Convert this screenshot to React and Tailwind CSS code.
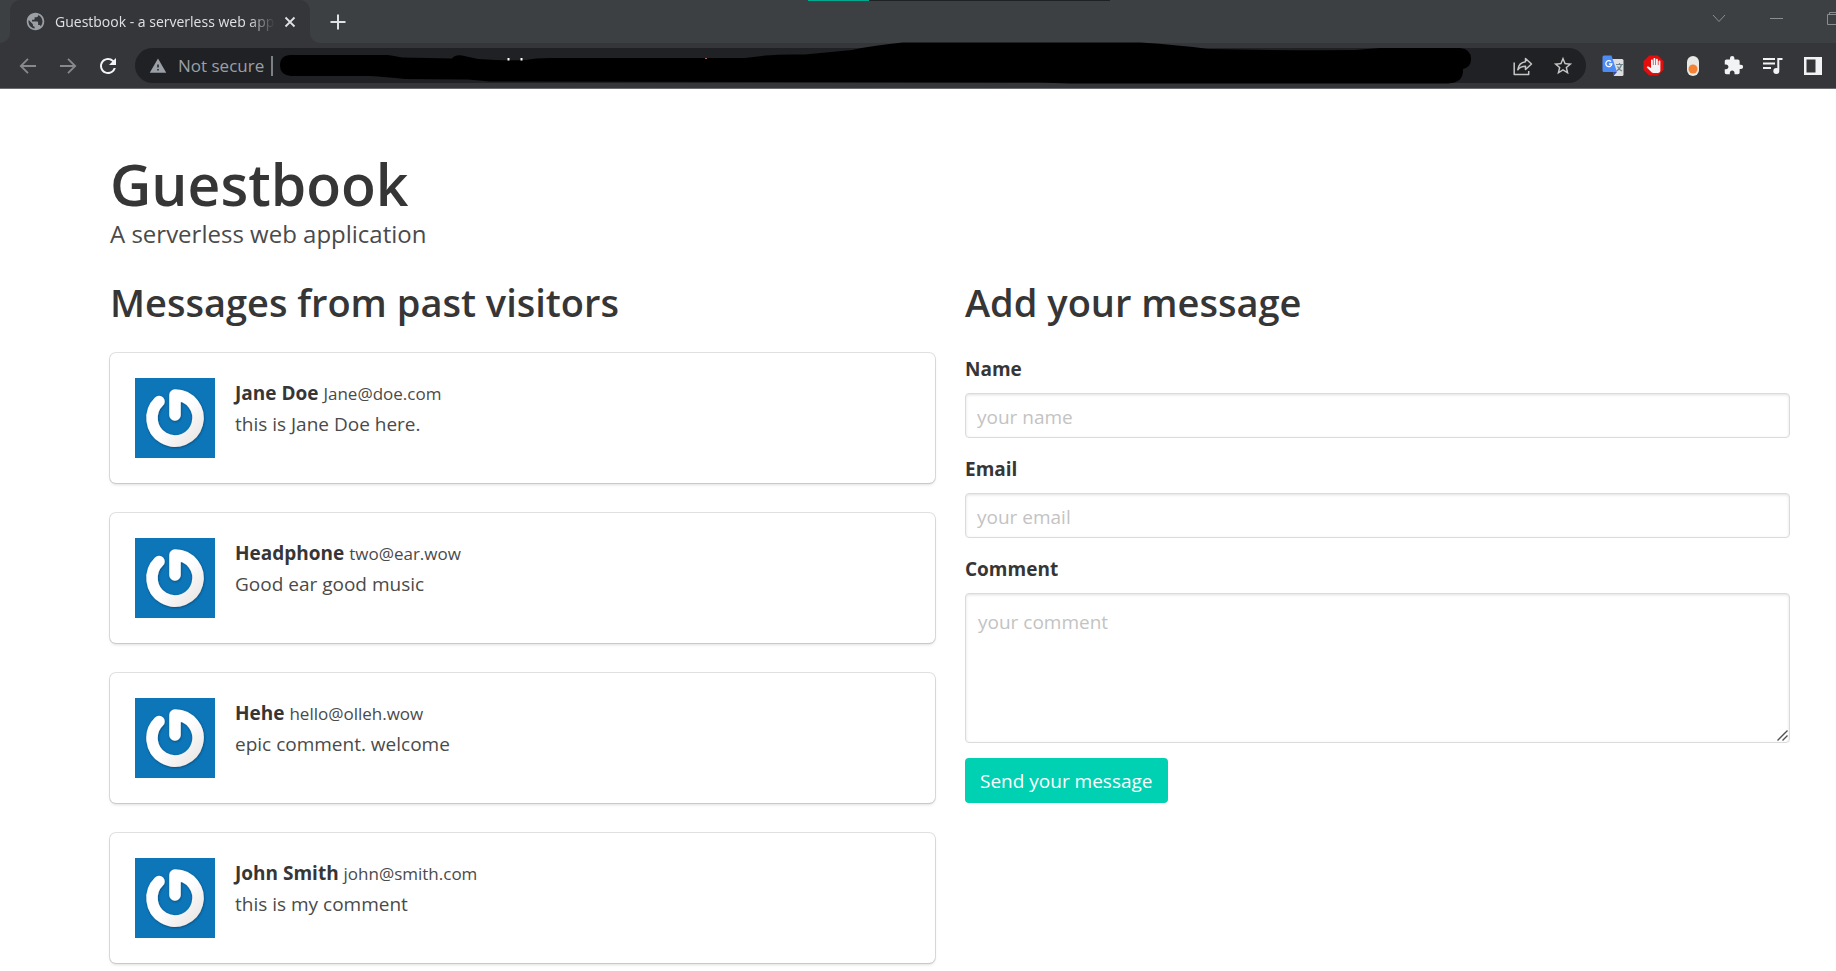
import React from "react";
import { MdExtension, MdPanTool, MdPublic, MdQueueMusic, MdRefresh, MdStarBorder, MdWarning } from "react-icons/md";

const messages = [
  { name: "Jane Doe", email: "Jane@doe.com", text: "this is Jane Doe here." },
  { name: "Headphone", email: "two@ear.wow", text: "Good ear good music" },
  { name: "Hehe", email: "hello@olleh.wow", text: "epic comment. welcome" },
  { name: "John Smith", email: "john@smith.com", text: "this is my comment" },
];

function IconButton({ label, className = "", children }) {
  return (
    <button type="button" aria-label={label} className={`flex h-8 w-10 shrink-0 items-center justify-center ${className}`}>
      {children}
    </button>
  );
}

function Arrow({ back }) {
  return (
    <svg width="18" height="18" viewBox="0 0 18 18" fill="none" stroke="currentColor" strokeWidth="1.8">
      {back ? <path d="M17 9H2M9 1.8 1.8 9 9 16.2" /> : <path d="M1 9h15M9 1.8 16.2 9 9 16.2" />}
    </svg>
  );
}

function TabStrip() {
  return (
    <div className="relative flex h-[43px] items-stretch bg-[#3c4043] pl-[10px] text-[#dfe1e5]">
      <div className="relative flex w-[300px] items-center rounded-t-[10px] bg-[#35363a] pr-[14px] pl-[15px]">
        <svg className="absolute bottom-0 -left-[10px]" width="10" height="10"><path d="M10 0v10H0A10 10 0 0 0 10 0" fill="#35363a" /></svg>
        <svg className="absolute -right-[10px] bottom-0" width="10" height="10"><path d="M0 0v10h10A10 10 0 0 1 0 0" fill="#35363a" /></svg>
        <MdPublic className="shrink-0 text-[#9aa0a6]" size={21} />
        <span className="ml-[9px] w-[220px] overflow-hidden text-[14px] whitespace-nowrap [mask-image:linear-gradient(to_right,black_88%,transparent)]">
          Guestbook - a serverless web application
        </span>
        <button type="button" aria-label="Close tab" className="ml-auto">
          <svg width="12" height="12" viewBox="0 0 12 12" stroke="currentColor" strokeWidth="1.8"><path d="m1.5 1.5 9 9m0-9-9 9" /></svg>
        </button>
      </div>
      <button type="button" aria-label="New tab" className="ml-5 self-center">
        <svg width="16" height="16" viewBox="0 0 16 16" stroke="currentColor" strokeWidth="2"><path d="M8 .5v15M.5 8h15" /></svg>
      </button>
      <div className="absolute top-0 left-[44%] flex h-px w-[302px] bg-[#202124]">
        <div className="w-[61px] bg-[#00a98f]" />
      </div>
      <div className="absolute top-[10px] right-0 flex items-center text-[#8b8e90]">
        <svg width="128" height="18" viewBox="0 0 128 18" fill="none" stroke="currentColor">
          <path d="m5 5 6 6.5L17 5M62 8.500h13" />
          <path d="M119.500 4.500h12v10h-12zM121.500 4.500v-2h12" />
        </svg>
      </div>
    </div>
  );
}

function Toolbar() {
  return (
    <div className="flex h-[46px] items-center border-b border-[#6b6c6f] bg-[#35363a] pr-[3px] pl-2">
      <IconButton label="Back" className="text-[#87898c]"><Arrow back /></IconButton>
      <IconButton label="Forward" className="text-[#87898c]"><Arrow /></IconButton>
      <IconButton label="Reload" className="text-[#f1f3f4]"><MdRefresh size={24} /></IconButton>
      <div className="relative ml-[7px] flex h-[35px] flex-1 items-center rounded-full bg-[#202124] pr-[3px] pl-[14px]">
        <MdWarning className="text-[#9aa0a6]" size={18} />
        <span className="ml-[11px] text-[17px] text-[#9aa0a6]">Not secure</span>
        <span className="ml-[7px] h-5 w-[2px] bg-[#7d8083]" />
        <svg className="absolute -top-[6px] left-[145px]" width="1192" height="42" viewBox="280 42 1192 42">
          <path d="M291 55H388Q396 56 402 57.500L452 58.500Q455 54.500 462 55.500L478 59Q510 61 526 60Q535 58 550 58H745L765 55.500Q780 54 805 54.500L852 50Q875 45 903 42.500H1140Q1180 45 1208 49Q1280 50.500 1355 50L1380 48H1460Q1471 49 1471 59Q1471 67 1463 69Q1464 83 1448 83.500H1070L1040 82.500L770 82L490 81.500L468 79.500L405 79Q385 77 370 76H291Q280 75 280 65.500Q280 55 291 55Z" fill="#000" />
          <path d="M507.500 58h2v2.500h-2zM520.500 58h2v2.500h-2z" fill="#fff" />
          <path d="M705 58h2v1h-2z" fill="#a66" />
        </svg>
        <div className="ml-auto flex text-[#c4c7c5]">
          <IconButton label="Share">
            <svg width="20" height="20" viewBox="0 0 20 20" fill="none" stroke="currentColor" strokeWidth="1.5" strokeLinejoin="round">
              <path d="M1.200 6.500v12h14.500V15" />
              <path d="M12.500 2.500 18.500 8l-6 5.500v-3.300c-3.500 0-5.800 1-7.700 3.600.6-4.200 3-7.400 7.700-8z" />
            </svg>
          </IconButton>
          <IconButton label="Bookmark"><MdStarBorder size={22} /></IconButton>
        </div>
      </div>
      <div className="ml-[7px] flex text-[#f1f3f4]">
        <IconButton label="Translate">
          <svg width="22" height="22" viewBox="0 0 22 22">
            <path d="M9 4h11a1.500 1.500 0 0 1 1.500 1.500v14A1.500 1.500 0 0 1 20 21h-8z" fill="#dcdfe2" />
            <path d="M14 9.500h7M17.500 8v1.500M19.500 9.500c-.8 3-2.500 5-5 6.500M15.500 11.500c1 2 2.500 3.500 4.500 4.500" fill="none" stroke="#70848c" strokeWidth="1.200" />
            <path d="m11 17 4 0-3.500 4z" fill="#3949ab" />
            <path d="M2 .5h7.500L15 17H2A1.500 1.500 0 0 1 .5 15.500V2A1.500 1.500 0 0 1 2 .5z" fill="#4e8cf5" />
            <path d="M9 6.600A3 3 0 1 0 9.800 9H7" fill="none" stroke="#fff" strokeWidth="1.300" />
          </svg>
        </IconButton>
        <IconButton label="Ad blocker">
          <span className="relative flex items-center justify-center">
            <svg width="21" height="21" viewBox="0 0 21 21"><path d="M6.200.5h8.600l5.700 5.700v8.600l-5.700 5.700H6.200L.5 14.800V6.200z" fill="#e40d0d" /></svg>
            <MdPanTool className="absolute" size={15} />
          </span>
        </IconButton>
        <IconButton label="Recorder">
          <svg width="12" height="20" viewBox="0 0 12 20"><rect width="12" height="20" rx="6" fill="#e8e8e6" /><circle cx="6" cy="13" r="4.500" fill="#f58232" /></svg>
        </IconButton>
        <IconButton label="Extensions"><MdExtension size={21} /></IconButton>
        <IconButton label="Media">
          <svg width="20" height="18" viewBox="0 0 20 18" fill="none" stroke="currentColor" strokeWidth="2">
            <path d="M0 2h12M0 6.500h12M0 11h8M19.500 2h-4.200v11" />
            <circle cx="13.300" cy="14" r="3" fill="currentColor" stroke="none" />
          </svg>
        </IconButton>
        <IconButton label="Side panel">
          <svg width="18" height="18" viewBox="0 0 18 18"><path d="M0 0h18v18H0zM2.500 2.500v13h9v-13z" fill="currentColor" fillRule="evenodd" /></svg>
        </IconButton>
      </div>
    </div>
  );
}

function Avatar() {
  return (
    <svg className="shrink-0" width="80" height="80" viewBox="0 0 80 80" role="img" aria-label="avatar">
      <defs>
        <linearGradient id="ring" x1="0" y1="0" x2="1" y2="1">
          <stop offset="0.500" stopColor="#fff" />
          <stop offset="1" stopColor="#e9e7e5" />
        </linearGradient>
        <filter id="soft" x="-20%" y="-20%" width="140%" height="140%">
          <feDropShadow dx="0.500" dy="0.800" stdDeviation="0.900" floodColor="#04365c" floodOpacity="0.700" />
        </filter>
      </defs>
      <rect width="80" height="80" fill="#0c76b9" />
      <path d="M24 23.500A23 23 0 1 0 40 17V37" fill="none" stroke="url(#ring)" strokeWidth="11.500" strokeLinecap="round" strokeLinejoin="round" filter="url(#soft)" />
    </svg>
  );
}

function MessageCard({ name, email, text }) {
  return (
    <article className="flex gap-5 rounded-md bg-white p-[25px] shadow-[0_2px_3px_rgba(10,10,10,0.12),0_0_0_1px_rgba(10,10,10,0.12)]">
      <Avatar />
      <p className="text-[19px] leading-[30px]">
        <strong className="font-bold text-[#363636]">{name}</strong> <small className="text-[17px]">{email}</small>
        <br />
        {text}
      </p>
    </article>
  );
}

const fieldClass =
  "block w-full rounded-[4px] border border-[#dbdbdb] bg-white text-[19px] leading-[30px] text-[#363636] shadow-[inset_0_1px_3px_rgba(10,10,10,0.12)] placeholder:text-[#c3c3c3]";

function Field({ id, label, children }) {
  return (
    <div className="mb-[15px]">
      <label htmlFor={id} className="mb-2 block text-[19px] leading-[32px] font-bold text-[#363636]">{label}</label>
      {children}
    </div>
  );
}

export default function App() {
  return (
    <div className="bg-white font-['Open_Sans',sans-serif] text-[#4a4a4a]">
      <header>
        <TabStrip />
        <Toolbar />
      </header>
      <main className="pt-[62px] pr-[46px] pb-2 pl-[110px]">
        <h1 className="text-[57px] leading-[67px] font-semibold text-[#363636]">Guestbook</h1>
        <p className="mb-[30px] text-[24px] leading-[32px]">A serverless web application</p>
        <div className="grid grid-cols-2 gap-[30px]">
          <section>
            <h2 className="mb-7 text-[38px] leading-[45px] font-semibold text-[#363636]">Messages from past visitors</h2>
            <div className="flex flex-col gap-[30px]">
              {messages.map((m) => <MessageCard key={m.name} {...m} />)}
            </div>
          </section>
          <section>
            <h2 className="mb-7 text-[38px] leading-[45px] font-semibold text-[#363636]">Add your message</h2>
            <form onSubmit={(e) => e.preventDefault()}>
              <Field id="name" label="Name">
                <input id="name" type="text" placeholder="your name" className={`${fieldClass} h-[45px] px-[11px] pt-[2px]`} />
              </Field>
              <Field id="email" label="Email">
                <input id="email" type="email" placeholder="your email" className={`${fieldClass} h-[45px] px-[11px] pt-[2px]`} />
              </Field>
              <Field id="comment" label="Comment">
                <div className="relative">
                  <textarea id="comment" placeholder="your comment" className={`${fieldClass} h-[150px] resize-y px-3 py-[13px] [&::-webkit-resizer]:bg-transparent`} />
                  <svg className="pointer-events-none absolute right-[2px] bottom-[2px]" width="11" height="11" viewBox="0 0 11 11" fill="none" stroke="#505050" strokeWidth="1.400">
                    <path d="M.5 10.500 10.500.5M5.500 10.500l5-5" />
                  </svg>
                </div>
              </Field>
              <button type="submit" className="h-[45px] rounded-[4px] bg-[#00d1b2] px-[15px] pt-[2px] text-[19px] text-white">Send your message</button>
            </form>
          </section>
        </div>
      </main>
    </div>
  );
}
